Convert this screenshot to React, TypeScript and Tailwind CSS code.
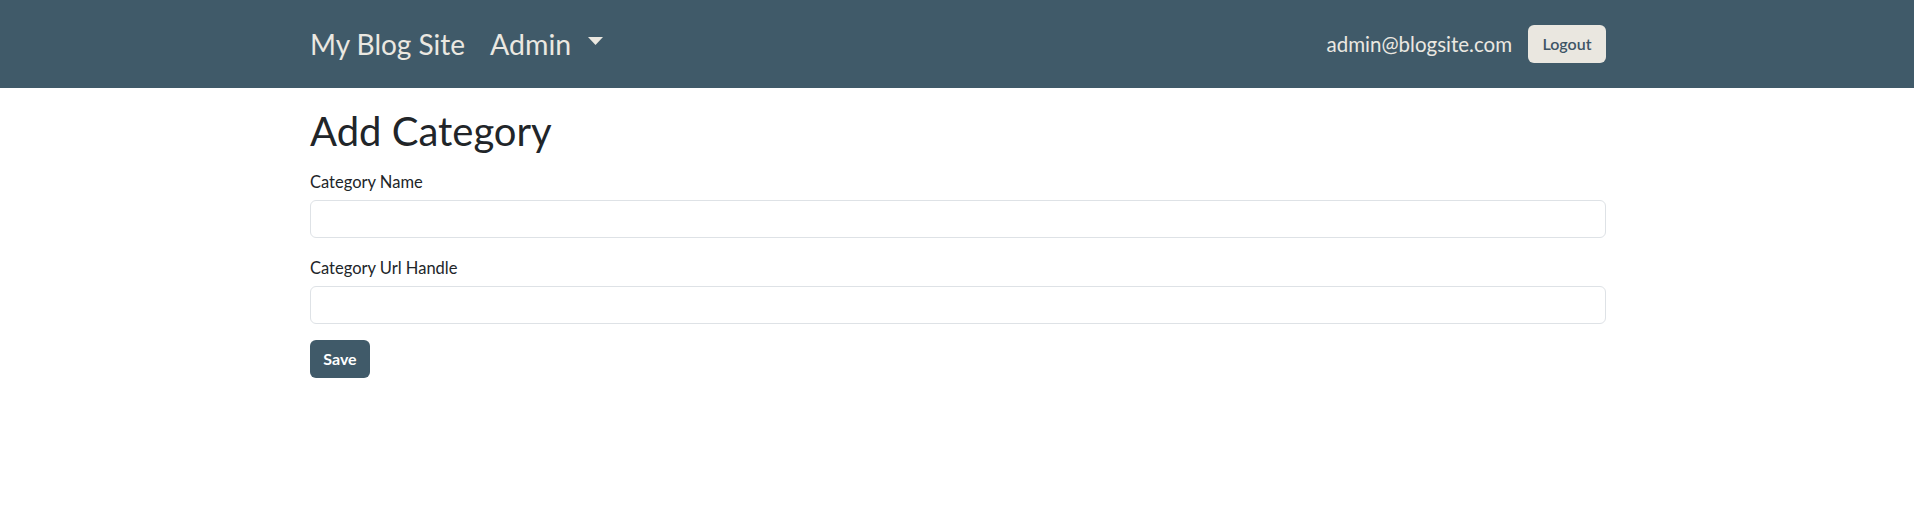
export default function App() {
  return (
    <div className="min-h-screen bg-white font-['Lato',sans-serif] text-[#212529]">
      {/* Navbar */}
      <nav className="h-[88px] bg-[#405a69]">
        <div className="mx-auto flex h-full max-w-[1320px] items-center justify-between pl-[13px] pr-[11px]">
          <div className="flex items-center gap-[25px]">
            <span className="text-[28px] text-[#ebe8e1]">My Blog Site</span>
            <button className="flex items-center gap-[17px] text-[28.5px] text-[#ebe8e1]">
              Admin
              <svg width="15" height="8" viewBox="0 0 15 8" className="mt-[-6px]">
                <path d="M0 0 L15 0 L7.5 8 Z" fill="#ebe8e1" />
              </svg>
            </button>
          </div>
          <div className="flex items-center gap-[16px]">
            <span className="mt-[1px] text-[20.5px] text-[#ebe8e1]">admin@blogsite.com</span>
            <button className="h-[38px] w-[78px] rounded-md bg-[#eae7e0] text-[16px] font-semibold text-[#3e5566]">
              Logout
            </button>
          </div>
        </div>
      </nav>

      {/* Form */}
      <div className="mx-auto max-w-[1320px] pl-[13px] pr-[11px]">
        <h1 className="mt-[19px] mb-2 text-[40px] leading-[1.2]">Add Category</h1>
        <form>
          <div className="mt-[13px]">
            <label className="mb-1 block text-[16.5px] leading-7">Category Name</label>
            <input
              type="text"
              className="block h-[38px] w-full rounded-md border border-[#dee2e6] px-3 outline-none"
            />
          </div>
          <div className="mt-4">
            <label className="mb-1 block text-[16.5px] leading-7">Category Url Handle</label>
            <input
              type="text"
              className="block h-[38px] w-full rounded-md border border-[#dee2e6] px-3 outline-none"
            />
          </div>
          <div className="mt-4">
            <button
              type="button"
              className="h-[38px] w-[60px] rounded-md bg-[#405a69] text-[16px] font-bold text-white"
            >
              Save
            </button>
          </div>
        </form>
      </div>
    </div>
  );
}
